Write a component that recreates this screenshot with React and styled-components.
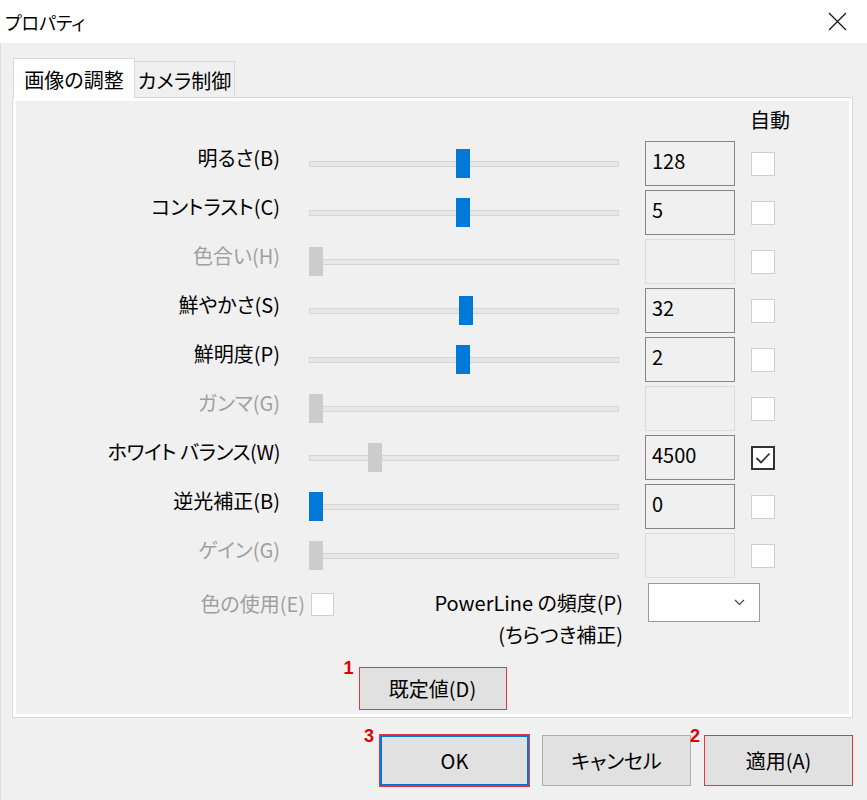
import React from "react";
import styled, { createGlobalStyle, css } from "styled-components";

const GlobalStyle = createGlobalStyle`
  html, body { margin: 0; padding: 0; background: #f0f0f0; }
  body { font-family: "Noto Sans CJK JP", "Noto Sans", sans-serif; }
  * { box-sizing: border-box; }
`;

const Window = styled.div`
  width: 867px;
  height: 800px;
  background: #f0f0f0;
  display: flex;
  flex-direction: column;
  color: #000;
  font-feature-settings: "palt";
  overflow: hidden;
`;

const TitleBar = styled.div`
  height: 43px;
  flex: none;
  background: #fff;
  display: flex;
  align-items: center;
  justify-content: space-between;
  padding-left: 5px;
`;

const Title = styled.div`
  font-size: 18px;
  line-height: 1;
`;

const CloseBtn = styled.div`
  width: 60px;
  height: 43px;
  display: flex;
  align-items: center;
  justify-content: center;
`;

const Body = styled.div`
  flex: 1;
  display: flex;
  flex-direction: column;
  padding: 15px 14px 0 11px;
  border-left: 1px solid #dcdcdc;
`;

const TabStrip = styled.div`
  display: flex;
  align-items: flex-end;
  height: 39px;
  padding-left: 1px;
  position: relative;
  z-index: 1;
`;

const Tab = styled.div`
  font-size: 20px;
  line-height: 1;
  display: flex;
  align-items: center;
  justify-content: center;
  border: 1px solid #d9d9d9;
  border-bottom: none;
  white-space: nowrap;
  ${(p) =>
    p.$active
      ? css`
          height: 40px;
          width: 122px;
          background: #fff;
          margin-bottom: -1px;
          position: relative;
          z-index: 2;
          padding-top: 3px;
        `
      : css`
          height: 36px;
          width: 101px;
          background: #f0f0f0;
          margin-left: -1px;
          padding-top: 3px;
        `}
`;

const Panel = styled.div`
  border: 1px solid #d9d9d9;
  box-shadow: inset 0 0 0 3px #fff;
  padding: 2px 4px 7px 4px;
  display: flex;
  flex-direction: column;
`;

const HeaderRow = styled.div`
  height: 39px;
  display: flex;
  align-items: center;
  justify-content: flex-end;
  padding-right: 58px;
  font-size: 20px;
  line-height: 24px;
`;

const Row = styled.div`
  height: 49px;
  display: flex;
  align-items: center;
`;

const RowLabel = styled.div`
  width: 263px;
  text-align: right;
  font-size: 20px;
  line-height: 24px;
  padding-bottom: 11px;
  white-space: nowrap;
  letter-spacing: ${(p) => p.$tight ? "-0.4px" : "0"};
  color: ${(p) => (p.$disabled ? "#a0a0a0" : "#000")};
`;

const Slider = styled.div`
  position: relative;
  width: 310px;
  height: 29px;
  margin-left: 29px;
  display: flex;
  align-items: center;
`;

const Track = styled.div`
  width: 100%;
  height: 6px;
  background: #e7e7e7;
  border: 1px solid #d6d6d6;
`;

const Thumb = styled.div`
  position: absolute;
  top: 0;
  width: 14px;
  height: 29px;
  background: ${(p) => (p.$active ? "#0078d7" : "#cccccc")};
`;

const ValueBox = styled.div`
  margin-left: 26px;
  width: 90px;
  height: 45px;
  border: 1px solid ${(p) => (p.$disabled ? "#dcdcdc" : "#858585")};
  font-size: 20px;
  line-height: 1;
  display: flex;
  align-items: center;
  padding: 0 0 5px 6px;
`;

const CheckBox = styled.div`
  margin-left: ${(p) => p.$ml ?? 16}px;
  width: ${(p) => p.$size ?? 24}px;
  height: ${(p) => p.$size ?? 24}px;
  flex: none;
  background: #fff;
  border: ${(p) => (p.$checked ? "2px solid #333" : "1px solid #cfcfcf")};
  display: flex;
  align-items: center;
  justify-content: center;
`;

const BottomRow = styled.div`
  display: flex;
  align-items: flex-start;
  padding-top: 3px;
  font-size: 20px;
`;

const ColorUse = styled.div`
  width: 317px;
  display: flex;
  justify-content: flex-end;
  align-items: center;
  margin-top: 9px;
  color: #a0a0a0;
  line-height: 24px;
`;

const PowerLabel = styled.div`
  width: 289px;
  text-align: right;
  line-height: 32px;
  margin-top: 4px;
  white-space: nowrap;
`;

const Select = styled.div`
  margin-left: 25px;
  width: 112px;
  height: 39px;
  background: #fff;
  border: 1px solid #9a9a9a;
  display: flex;
  align-items: center;
  justify-content: flex-end;
  padding-right: 14px;
`;

const DefaultRow = styled.div`
  display: flex;
  justify-content: center;
  margin-top: 16px;
`;

const Footer = styled.div`
  display: flex;
  justify-content: flex-end;
  gap: 13px;
  margin-top: 17px;
`;

const RED = "#e8383d";

const Button = styled.button`
  width: ${(p) => p.$w}px;
  height: ${(p) => p.$h}px;
  font-family: inherit;
  font-feature-settings: "palt";
  font-size: 20px;
  line-height: 1;
  color: #000;
  background: #e1e1e1;
  border: 1px solid ${(p) => (p.$marked ? RED : "#adadad")};
  padding: 0;
  ${(p) =>
    p.$default &&
    css`
      border: 2px solid #0078d7;
      outline: 1px solid ${RED};
      outline-offset: 0;
    `}
`;

const AnnotWrap = styled.div`
  position: relative;
  display: flex;
`;

const Badge = styled.span`
  position: absolute;
  right: calc(100% + ${(p) => p.$gap ?? 5}px);
  top: ${(p) => p.$top ?? -8}px;
  color: #e00000;
  font-family: "Liberation Sans", Arial, sans-serif;
  font-weight: bold;
  font-size: 18px;
  line-height: 18px;
`;

const TRAVEL = 310 - 14;

const rows = [
  { label: "明るさ(B)", value: "128", pos: 0.4966, active: true },
  { label: "コントラスト(C)", value: "5", pos: 0.4966, active: true },
  { label: "色合い(H)", value: "", pos: 0, disabled: true },
  { label: "鮮やかさ(S)", value: "32", pos: 0.507, active: true },
  { label: "鮮明度(P)", value: "2", pos: 0.4966, active: true },
  { label: "ガンマ(G)", value: "", pos: 0, disabled: true },
  { label: "ホワイト バランス(W)", value: "4500", pos: 0.2, active: false, checked: true, tight: true },
  { label: "逆光補正(B)", value: "0", pos: 0, active: true },
  { label: "ゲイン(G)", value: "", pos: 0, disabled: true },
];

const CloseIcon = () => (
  <svg width="19" height="19" viewBox="0 0 19 19">
    <path d="M1 1 L18 18 M18 1 L1 18" stroke="#111" strokeWidth="1.2" fill="none" />
  </svg>
);

const CheckIcon = () => (
  <svg width="20" height="20" viewBox="0 0 20 20">
    <polyline points="3.5,10 8,14.5 16.5,5.5" stroke="#333" strokeWidth="1.8" fill="none" />
  </svg>
);

const Chevron = () => (
  <svg width="11" height="7" viewBox="0 0 11 7">
    <polyline points="1,1 5.5,5.5 10,1" stroke="#444" strokeWidth="1.2" fill="none" />
  </svg>
);

export default function App() {
  return (
    <>
      <GlobalStyle />
      <Window>
        <TitleBar>
          <Title>プロパティ</Title>
          <CloseBtn>
            <CloseIcon />
          </CloseBtn>
        </TitleBar>
        <Body>
          <TabStrip>
            <Tab $active>画像の調整</Tab>
            <Tab>カメラ制御</Tab>
          </TabStrip>
          <Panel>
            <HeaderRow>自動</HeaderRow>
            {rows.map((r) => (
              <Row key={r.label}>
                <RowLabel $disabled={r.disabled} $tight={r.tight}>{r.label}</RowLabel>
                <Slider>
                  <Track />
                  <Thumb $active={r.active} style={{ left: Math.round(r.pos * TRAVEL) }} />
                </Slider>
                <ValueBox $disabled={r.disabled}>{r.value}</ValueBox>
                <CheckBox $checked={r.checked}>{r.checked && <CheckIcon />}</CheckBox>
              </Row>
            ))}
            <BottomRow>
              <ColorUse>
                色の使用(E)
                <CheckBox $size={23} $ml={6} />
              </ColorUse>
              <PowerLabel>
                PowerLine の頻度(P)
                <br />
                (ちらつき補正)
              </PowerLabel>
              <Select>
                <Chevron />
              </Select>
            </BottomRow>
            <DefaultRow>
              <AnnotWrap>
                <Badge $gap={5}>1</Badge>
                <Button $w={148} $h={43} $marked>
                  既定値(D)
                </Button>
              </AnnotWrap>
            </DefaultRow>
          </Panel>
          <Footer>
            <AnnotWrap>
              <Badge $gap={6}>3</Badge>
              <Button $w={149} $h={51} $default>
                OK
              </Button>
            </AnnotWrap>
            <Button $w={149} $h={51}>
              キャンセル
            </Button>
            <AnnotWrap>
              <Badge $gap={4}>2</Badge>
              <Button $w={149} $h={51} $marked>
                適用(A)
              </Button>
            </AnnotWrap>
          </Footer>
        </Body>
      </Window>
    </>
  );
}
